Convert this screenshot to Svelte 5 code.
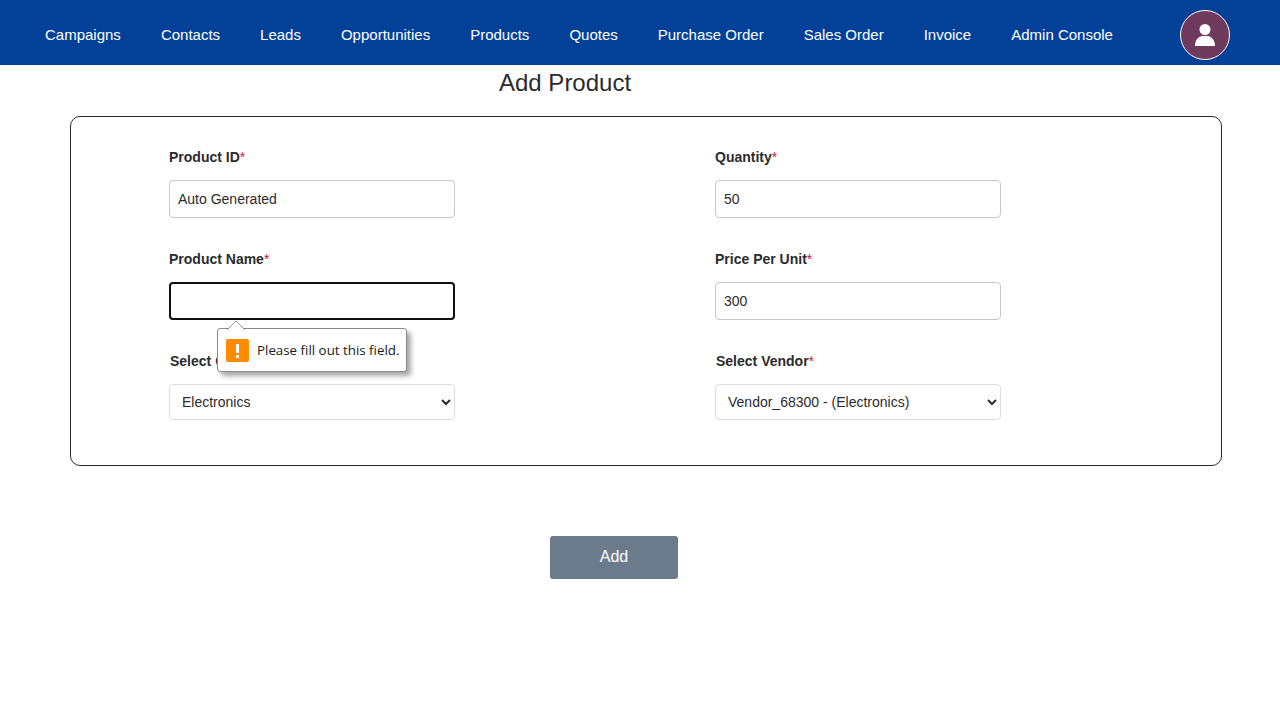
<script>
  const links = ['Campaigns','Contacts','Leads','Opportunities','Products','Quotes','Purchase Order','Sales Order','Invoice','Admin Console'];
</script>

<nav class="nav">
  <div class="links">
    {#each links as l}<a href="#x" class="link">{l}</a>{/each}
  </div>
  <div class="avatar">
    <svg width="20" height="22" viewBox="0 0 20 22" fill="#fff"><circle cx="10" cy="5.5" r="5.5"/><path d="M0 22 C0 21 0 20 .5 18.5 C1.5 14.5 4.5 12 8 12 H12 C15.5 12 18.5 14.5 19.5 18.5 C20 20 20 21 20 22 Z"/></svg>
  </div>
</nav>

<main>
  <h1 class="title">Add Product</h1>
  <form class="card" onsubmit={(e) => e.preventDefault()}>
    <div class="field">
      <label for="pid">Product ID<span class="req">*</span></label>
      <input id="pid" value="Auto Generated" />
    </div>
    <div class="field">
      <label for="qty">Quantity<span class="req">*</span></label>
      <input id="qty" value="50" />
    </div>
    <div class="field">
      <label for="pname">Product Name<span class="req">*</span></label>
      <input id="pname" class="focused" value="" />
      <div class="tip">
        <svg class="arrow" width="20" height="10" viewBox="0 0 20 10"><path d="M1 10 L10 1 L19 10" fill="#fff" stroke="#9a9a9a"/></svg>
        <svg class="warn" width="23" height="23" viewBox="0 0 23 23"><rect width="23" height="23" rx="2" fill="#ff8c00"/><rect x="10" y="5" width="3" height="9" fill="#fff"/><rect x="10" y="16" width="3" height="3" fill="#fff"/></svg>
        <span class="tiptext">Please fill out this field.</span>
      </div>
    </div>
    <div class="field">
      <label for="ppu">Price Per Unit<span class="req">*</span></label>
      <input id="ppu" value="300" />
    </div>
    <div class="field">
      <label class="indent" for="cat">Select Category<span class="req">*</span></label>
      <select id="cat"><option>Electronics</option></select>
    </div>
    <div class="field">
      <label class="indent" for="ven">Select Vendor<span class="req">*</span></label>
      <select id="ven"><option>Vendor_68300 - (Electronics)</option></select>
    </div>
  </form>
  <button class="add">Add</button>
</main>

<style>
  :global(body) { margin: 0; background: #fff; font-family: "Liberation Sans", Arial, sans-serif; color: #212529; }
  .nav { height: 65px; box-sizing: border-box; background: #034198; display: flex; align-items: center; justify-content: space-between; padding: 5px 50px 0 45px; }
  .links { display: flex; gap: 40px; }
  .link { color: #fff; font-size: 15px; text-decoration: none; line-height: 20px; }
  .avatar { width: 50px; height: 50px; box-sizing: border-box; border-radius: 50%; border: 1px solid #fff; background: #6f3a5e; display: flex; align-items: center; justify-content: center; }
  .title { margin: 0; height: 51px; font-size: 24px; font-weight: 400; line-height: 36px; color: #2b2b2b; padding-left: 499px; }
  .card { margin: 0 58px 0 70px; box-sizing: border-box; height: 350px; border: 1px solid #2b2b2b; border-radius: 10px; padding: 30px 0 0 98px; display: grid; grid-template-columns: 546px 1fr; grid-auto-rows: 102px; align-content: start; }
  .field { position: relative; display: flex; flex-direction: column; align-items: flex-start; }
  label { font-size: 14px; font-weight: 700; line-height: 21px; margin-bottom: 12px; color: #2b2b2b; }
  .indent { margin-left: 1px; }
  .req { color: #e0103a; font-weight: 400; }
  input { box-sizing: border-box; width: 286px; height: 38px; padding: 0 8px; font: 14px "Liberation Sans", Arial, sans-serif; color: #2b2b2b; border: 1px solid #c8c8c8; border-radius: 4px; background: #fff; outline: none; }
  .focused { border: 2px solid #101010; }
  select { box-sizing: border-box; width: 286px; height: 36px; padding: 0 8px; font: 14px "Liberation Sans", Arial, sans-serif; color: #2b2b2b; border: 1px solid #dedede; border-radius: 4px; background: #fff; }
  .tip { position: absolute; left: 48px; top: 79px; width: 190px; height: 44px; box-sizing: border-box; background: #fff; border: 1px solid #8a8a8a; border-radius: 3px; box-shadow: 4px 4px 5px rgba(0,0,0,.35); display: flex; align-items: center; padding-left: 8px; gap: 8px; z-index: 2; }
  .arrow { position: absolute; left: 8px; top: -9px; }
  .warn { flex: none; }
  .tiptext { font: 13.33px "Open Sans", sans-serif; color: #1a1a1a; white-space: nowrap; }
  .add { display: block; margin: 70px 0 0 550px; width: 128px; height: 43px; padding: 0 0 2px; background: #6c7b8b; color: #fff; border: 0; border-radius: 3px; font: 16px "Liberation Sans", Arial, sans-serif; }
</style>
